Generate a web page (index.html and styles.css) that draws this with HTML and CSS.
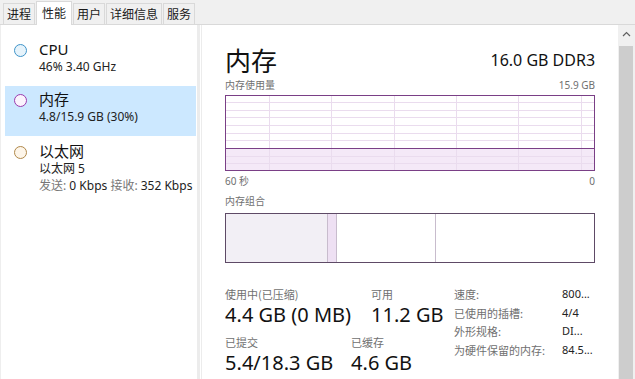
FILE: index.html
```html
<!DOCTYPE html>
<html lang="zh-CN">
<head>
<meta charset="utf-8">
<link rel="stylesheet" href="styles.css">
</head>
<body>
<div class="tabs">
  <div class="tab">进程</div>
  <div class="tab active">性能</div>
  <div class="tab">用户</div>
  <div class="tab">详细信息</div>
  <div class="tab">服务</div>
</div>
<div class="main">
  <div class="sidebar">
    <div class="item">
      <span class="dot dot-cpu"></span>
      <div class="item-text">
        <div class="item-title">CPU</div>
        <div class="item-sub">46% 3.40 GHz</div>
      </div>
    </div>
    <div class="item selected">
      <span class="dot dot-mem"></span>
      <div class="item-text">
        <div class="item-title">内存</div>
        <div class="item-sub">4.8/15.9 GB (30%)</div>
      </div>
    </div>
    <div class="item last">
      <span class="dot dot-eth"></span>
      <div class="item-text">
        <div class="item-title">以太网</div>
        <div class="item-sub">以太网 5</div>
        <div class="item-sub"><span class="muted">发送:</span> 0 Kbps <span class="muted">接收:</span> 352 Kbps</div>
      </div>
    </div>
  </div>
  <div class="content">
    <div class="header">
      <div class="title">内存</div>
      <div class="spec">16.0 GB DDR3</div>
    </div>
    <div class="label-row">
      <span>内存使用量</span><span>15.9 GB</span>
    </div>
    <svg class="chart" width="370" height="76" viewBox="0 0 370 76">
      <rect x="0" y="53" width="370" height="23" fill="#f4e9f7"/>
      <g stroke="#eadcee" stroke-width="1">
        <line x1="0" y1="7.5" x2="370" y2="7.5"/>
        <line x1="0" y1="15.5" x2="370" y2="15.5"/>
        <line x1="0" y1="22.5" x2="370" y2="22.5"/>
        <line x1="0" y1="30.5" x2="370" y2="30.5"/>
        <line x1="0" y1="38.5" x2="370" y2="38.5"/>
        <line x1="0" y1="45.5" x2="370" y2="45.5"/>
        <line x1="0" y1="61.5" x2="370" y2="61.5"/>
        <line x1="0" y1="68.5" x2="370" y2="68.5"/>
        <line x1="44.5" y1="0" x2="44.5" y2="76"/>
        <line x1="106.5" y1="0" x2="106.5" y2="76"/>
        <line x1="169.5" y1="0" x2="169.5" y2="76"/>
        <line x1="231.5" y1="0" x2="231.5" y2="76"/>
        <line x1="293.5" y1="0" x2="293.5" y2="76"/>
        <line x1="356.5" y1="0" x2="356.5" y2="76"/>
      </g>
      <line x1="0" y1="53.5" x2="370" y2="53.5" stroke="#7a3f86" stroke-width="1"/>
      <rect x="0.5" y="0.5" width="369" height="75" fill="none" stroke="#7a3f86" stroke-width="1"/>
    </svg>
    <div class="label-row axis">
      <span>60 秒</span><span>0</span>
    </div>
    <div class="label-row section">
      <span>内存组合</span>
    </div>
    <div class="combo">
      <div class="seg seg-used"></div>
      <div class="seg seg-mod"></div>
      <div class="seg seg-standby"></div>
      <div class="seg seg-free"></div>
    </div>
    <div class="stats">
      <div class="stats-left">
        <div class="stat-row">
          <div class="stat w146">
            <div class="stat-label">使用中(已压缩)</div>
            <div class="stat-value">4.4 GB (0 MB)</div>
          </div>
          <div class="stat">
            <div class="stat-label">可用</div>
            <div class="stat-value">11.2 GB</div>
          </div>
        </div>
        <div class="stat-row">
          <div class="stat w126">
            <div class="stat-label">已提交</div>
            <div class="stat-value">5.4/18.3 GB</div>
          </div>
          <div class="stat">
            <div class="stat-label">已缓存</div>
            <div class="stat-value">4.6 GB</div>
          </div>
        </div>
      </div>
      <div class="props">
        <div class="prop"><span class="prop-k">速度:</span><span class="prop-v">800...</span></div>
        <div class="prop"><span class="prop-k">已使用的插槽:</span><span class="prop-v">4/4</span></div>
        <div class="prop"><span class="prop-k">外形规格:</span><span class="prop-v">DI...</span></div>
        <div class="prop"><span class="prop-k">为硬件保留的内存:</span><span class="prop-v">84.5...</span></div>
      </div>
    </div>
  </div>
  <div class="scrollbar">
    <div class="arrow">
      <svg width="9" height="6" viewBox="0 0 9 6"><path d="M1 5 L4.5 1.5 L8 5" fill="none" stroke="#606060" stroke-width="1.2"/></svg>
    </div>
    <div class="thumb"></div>
  </div>
</div>
</body>
</html>
```

FILE: styles.css
```css
* { box-sizing: border-box; }
html, body {
  margin: 0;
  padding: 0;
  width: 635px;
  height: 379px;
  overflow: hidden;
  background: #ffffff;
  font-family: "Noto Sans", "Noto Sans CJK SC", sans-serif;
  color: #1a1a1a;
}

.tabs {
  display: flex;
  align-items: flex-end;
  height: 25px;
  padding-left: 3px;
  background: #f0f0f0;
  border-bottom: 1px solid #d9d9d9;
}
.tab {
  height: 21px;
  padding: 0 3px;
  margin-right: 1px;
  font-size: 12px;
  line-height: 20px;
  color: #1a1a1a;
  background: #f0f0f0;
  border: 1px solid #d9d9d9;
  border-bottom: none;
  font-family: "Noto Sans CJK SC", sans-serif;
}
.tab.active {
  height: 24px;
  background: #ffffff;
  margin-bottom: -1px;
  padding: 0 5px;
  line-height: 22px;
}

.main {
  display: flex;
  height: 354px;
}

.sidebar {
  width: 201px;
  padding: 11px 1px 0 4px;
  border-left: 1px solid #eeeeee;
  border-right: 3px solid #ececec;
}
.item {
  display: flex;
  align-items: flex-start;
  padding: 3px 0 6px 9px;
  height: 50px;
}
.item.last { height: auto; padding-top: 5px; }
.item.selected {
  background: #cce8ff;
}
.dot {
  width: 13px;
  height: 13px;
  border-radius: 50%;
  margin-top: 5px;
  margin-right: 12px;
  flex: none;
  border: 1.5px solid;
}
.dot-cpu { border-color: #3f94c9; background: #e6f3fb; }
.dot-mem { border-color: #9a3bae; background: #fbf3fd; }
.dot-eth { border-color: #b0884a; background: #fdf5e9; }
.item-title {
  font-size: 15px;
  line-height: 20px;
  color: #111;
}
.item-sub {
  font-size: 12px;
  line-height: 16.5px;
  color: #222;
  white-space: nowrap;
}
.muted { color: #777; }

.content {
  flex: 1;
  padding: 11px 23px 0 23px;
  border-left: 1px solid #ececec;
  margin-left: 1px;
}
.header {
  display: flex;
  justify-content: space-between;
  align-items: flex-end;
  height: 42px;
}
.title {
  font-size: 26px;
  line-height: 36px;
  color: #111;
  font-family: "Noto Sans CJK SC", sans-serif;
}
.spec {
  font-size: 16px;
  line-height: 22px;
  padding-bottom: 7px;
  color: #111;
}
.label-row {
  display: flex;
  justify-content: space-between;
  font-size: 10px;
  line-height: 14px;
  color: #707070;
  margin-bottom: 3px;
}
.chart { display: block; }
.label-row.axis { margin-top: 3px; }
.label-row.section { margin-top: 6px; margin-bottom: 5px; }

.combo {
  display: flex;
  width: 370px;
  height: 50px;
  border: 1px solid #5e4a66;
}
.seg { height: 100%; }
.seg-used { width: 102px; background: #f2eff5; border-right: 1px solid #c8bccd; }
.seg-mod { width: 9px; background: #eee0f3; border-right: 1px solid #c8bccd; }
.seg-standby { width: 99px; background: #ffffff; border-right: 1px solid #c8bccd; }
.seg-free { flex: 1; background: #ffffff; }

.stats {
  display: flex;
  margin-top: 25px;
}
.stats-left {
  width: 229px;
}
.stat-row {
  display: flex;
  margin-bottom: 7px;
}
.stat.w146 { width: 146px; }
.stat.w126 { width: 126px; }
.stat-label {
  font-size: 11px;
  line-height: 13px;
  color: #707070;
  font-family: "Noto Sans CJK SC", sans-serif;
}
.stat-value {
  font-size: 20px;
  line-height: 28px;
  color: #111;
  white-space: nowrap;
}
.props {
  margin-top: -3px;
}
.prop {
  display: flex;
  font-size: 11px;
  line-height: 18.7px;
}
.prop-k {
  width: 108px;
  color: #707070;
  font-family: "Noto Sans CJK SC", sans-serif;
}
.prop-v { color: #222; }

.scrollbar {
  width: 17px;
  display: flex;
  flex-direction: column;
  background: #f0f0f0;
}
.arrow {
  height: 21px;
  display: flex;
  align-items: center;
  justify-content: center;
  padding-bottom: 3px;
}
.thumb {
  flex: 1;
  margin: 0 2px 0 1px;
  background: #cdcdcd;
}
```
